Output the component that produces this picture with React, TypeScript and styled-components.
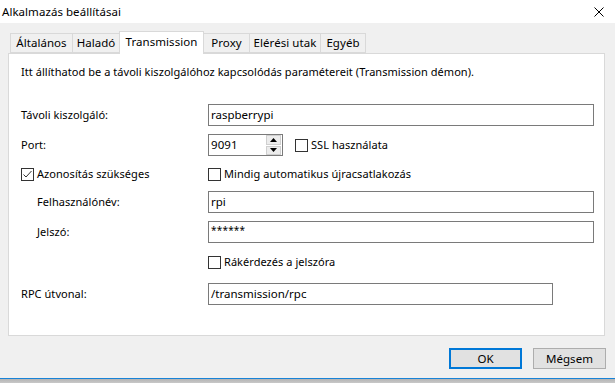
import React from "react";
import styled, { createGlobalStyle } from "styled-components";

const GlobalStyle = createGlobalStyle`
  html, body { margin: 0; padding: 0; background: #f0f0f0; }
  body { font-family: "Noto Sans", "Open Sans", sans-serif; font-size: 11px; letter-spacing: 0.05px; color: #000; }
  * { box-sizing: border-box; }
`;

const Window = styled.div`
  width: 615px;
  height: 383px;
  background: #f0f0f0;
  display: flex;
  flex-direction: column;
  overflow: hidden;
`;

const TitleBar = styled.div`
  height: 23px;
  background: #fff;
  display: flex;
  align-items: center;
  justify-content: space-between;
  padding: 0 11px 0 2px;
  flex-shrink: 0;
`;

const Title = styled.span`
  font-size: 11.5px;
  line-height: 16px;
`;

const Body = styled.div`
  flex: 1;
  display: flex;
  flex-direction: column;
  padding: 8px 10px 0 8px;
`;

const TabStrip = styled.div`
  display: flex;
  align-items: flex-end;
  height: 22px;
  padding-left: 2px;
  position: relative;
  z-index: 1;
`;

const Tab = styled.div<{ $active?: boolean; $w: number }>`
  width: ${(p) => p.$w}px;
  height: ${(p) => (p.$active ? 23 : 20)}px;
  margin-bottom: ${(p) => (p.$active ? -1 : 0)}px;
  background: ${(p) => (p.$active ? "#fff" : "#f0f0f0")};
  border: 1px solid #d9d9d9;
  border-bottom: ${(p) => (p.$active ? "none" : "1px solid #d9d9d9")};
  margin-left: -1px;
  display: flex;
  align-items: ${(p) => (p.$active ? "flex-start" : "center")};
  padding-top: ${(p) => (p.$active ? 2 : 0)}px;
  justify-content: center;
  line-height: 16px;
  font-size: 11.5px;
  &:first-child { margin-left: 0; }
`;

const Panel = styled.div`
  width: 597px;
  height: 283px;
  background: #fff;
  border: 1px solid #d9d9d9;
  padding: 10px 10px 0 12px;
  display: flex;
  flex-direction: column;
`;

const Intro = styled.div`
  line-height: 16px;
  height: 16px;
`;

const Row = styled.div<{ $mt: number }>`
  display: grid;
  grid-template-columns: 187px 1fr;
  align-items: center;
  height: 22px;
  margin-top: ${(p) => p.$mt}px;
`;

const Label = styled.span<{ $indent?: boolean }>`
  padding-left: ${(p) => (p.$indent ? 16 : 0)}px;
  line-height: 16px;
`;

const Cell = styled.div`
  display: flex;
  align-items: center;
`;

const TextBox = styled.div<{ $w: number; $pw?: boolean }>`
  width: ${(p) => p.$w}px;
  height: 22px;
  border: 1px solid #7a7a7a;
  background: #fff;
  padding: 0 2px;
  display: flex;
  align-items: ${(p) => (p.$pw ? "flex-start" : "center")};
  line-height: 16px;
  font-size: ${(p) => (p.$pw ? "10px" : "11.5px")};
  letter-spacing: ${(p) => (p.$pw ? "0.2px" : "0")};
`;

const Spinner = styled.div`
  width: 75px;
  height: 22px;
  border: 1px solid #7a7a7a;
  background: #fff;
  display: flex;
  align-items: center;
  padding-left: 2px;
  justify-content: space-between;
  line-height: 16px;
  font-size: 11.5px;
`;

const SpinButtons = styled.div`
  display: flex;
  flex-direction: column;
  gap: 1px;
  height: 20px;
  margin-right: 1px;
`;

const SpinButton = styled.div`
  width: 15px;
  height: 9.5px;
  background: #ececec;
  border: 1px solid #cfcfcf;
  display: flex;
  align-items: center;
  justify-content: center;
`;

const CheckWrap = styled.label<{ $ml?: number }>`
  display: flex;
  align-items: center;
  gap: 3px;
  margin-left: ${(p) => p.$ml ?? 0}px;
  line-height: 16px;
`;

const Box = styled.span`
  width: 13px;
  height: 13px;
  border: 1px solid #333;
  background: #fff;
  display: inline-flex;
  align-items: center;
  justify-content: center;
  flex-shrink: 0;
`;

const Footer = styled.div`
  display: flex;
  justify-content: flex-end;
  gap: 11px;
  margin-top: 12px;
  margin-right: -1px;
`;

const Button = styled.div<{ $default?: boolean }>`
  width: 73px;
  height: 21px;
  background: #e1e1e1;
  border: ${(p) => (p.$default ? "2px solid #0078d7" : "1px solid #adadad")};
  display: flex;
  align-items: center;
  justify-content: center;
  line-height: 16px;
  font-size: 11.5px;
`;

const BottomEdge = styled.div`
  margin-top: auto;
  height: 5px;
  border-top: 1px solid #1883d7;
  background: linear-gradient(#b4b4b4, #c8c8c8);
`;

const Check: React.FC<{ checked?: boolean; label: string; ml?: number }> = ({ checked, label, ml }) => (
  <CheckWrap $ml={ml}>
    <Box>
      {checked && (
        <svg width="11" height="11" viewBox="0 0 11 11">
          <path d="M1.5 5.5 L4 8 L9.5 2" fill="none" stroke="#333" strokeWidth="1" />
        </svg>
      )}
    </Box>
    {label}
  </CheckWrap>
);

const tabs: { name: string; w: number; active?: boolean }[] = [
  { name: "Általános", w: 63 },
  { name: "Haladó", w: 48 },
  { name: "Transmission", w: 85, active: true },
  { name: "Proxy", w: 47 },
  { name: "Elérési utak", w: 72 },
  { name: "Egyéb", w: 46 },
];

export default function App() {
  return (
    <>
      <GlobalStyle />
      <Window>
        <TitleBar>
          <Title>Alkalmazás beállításai</Title>
          <svg width="10" height="10" viewBox="0 0 10 10">
            <path d="M0.5 0.5 L9.5 9.5 M9.5 0.5 L0.5 9.5" stroke="#000" strokeWidth="1" />
          </svg>
        </TitleBar>
        <Body>
          <TabStrip>
            {tabs.map((t) => (
              <Tab key={t.name} $active={t.active} $w={t.w}>
                {t.name}
              </Tab>
            ))}
          </TabStrip>
          <Panel>
            <Intro>Itt állíthatod be a távoli kiszolgálóhoz kapcsolódás paramétereit (Transmission démon).</Intro>
            <Row $mt={24}>
              <Label>Távoli kiszolgáló:</Label>
              <TextBox $w={386}>raspberrypi</TextBox>
            </Row>
            <Row $mt={8}>
              <Label>Port:</Label>
              <Cell>
                <Spinner>
                  9091
                  <SpinButtons>
                    <SpinButton>
                      <svg width="7" height="4" viewBox="0 0 7 4">
                        <path d="M3.5 0 L7 4 L0 4 Z" fill="#000" />
                      </svg>
                    </SpinButton>
                    <SpinButton>
                      <svg width="7" height="4" viewBox="0 0 7 4">
                        <path d="M0 0 L7 0 L3.5 4 Z" fill="#000" />
                      </svg>
                    </SpinButton>
                  </SpinButtons>
                </Spinner>
                <Check label="SSL használata" ml={12} />
              </Cell>
            </Row>
            <Row $mt={7}>
              <Check checked label="Azonosítás szükséges" />
              <Check label="Mindig automatikus újracsatlakozás" />
            </Row>
            <Row $mt={6}>
              <Label $indent>Felhasználónév:</Label>
              <TextBox $w={386}>rpi</TextBox>
            </Row>
            <Row $mt={8}>
              <Label $indent>Jelszó:</Label>
              <TextBox $w={386} $pw>******</TextBox>
            </Row>
            <Row $mt={8}>
              <span />
              <Check label="Rákérdezés a jelszóra" />
            </Row>
            <Row $mt={10}>
              <Label>RPC útvonal:</Label>
              <TextBox $w={345}>/transmission/rpc</TextBox>
            </Row>
          </Panel>
          <Footer>
            <Button $default>OK</Button>
            <Button>Mégsem</Button>
          </Footer>
        </Body>
        <BottomEdge />
      </Window>
    </>
  );
}
